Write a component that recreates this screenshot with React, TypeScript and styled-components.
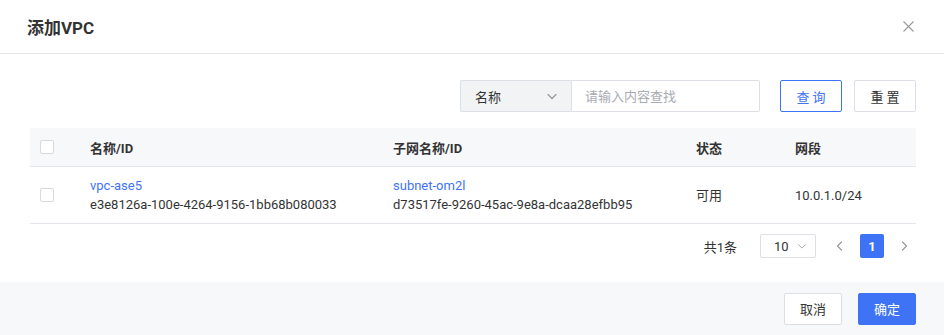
import React from 'react';
import styled, { createGlobalStyle } from 'styled-components';

const GlobalStyle = createGlobalStyle`
  * { box-sizing: border-box; }
  body {
    margin: 0;
    background: #fff;
    font-family: Roboto, "Noto Sans CJK SC", sans-serif;
    font-size: 13px;
    color: #333;
  }
`;

type RowType = {
    name: string;
    id: string;
    subnet: string;
    subnetId: string;
    status: string;
    cidr: string;
}

const rows: RowType[] = [
    {
        name: 'vpc-ase5',
        id: 'e3e8126a-100e-4264-9156-1bb68b080033',
        subnet: 'subnet-om2l',
        subnetId: 'd73517fe-9260-45ac-9e8a-dcaa28efbb95',
        status: '可用',
        cidr: '10.0.1.0/24',
    },
];

const Chevron = ({ dir = 'down', size = 12 }: { dir?: 'down' | 'left' | 'right'; size?: number }) => {
    const d = dir === 'down' ? 'M2 4.5 L6 8.5 L10 4.5' : dir === 'left' ? 'M7.5 2 L3.5 6 L7.5 10' : 'M4.5 2 L8.5 6 L4.5 10';
    return (
        <svg width={size} height={size} viewBox="0 0 12 12" fill="none">
            <path d={d} stroke="currentColor" strokeWidth="1.2" strokeLinecap="round" strokeLinejoin="round"/>
        </svg>
    );
};

export default function App() {
    return (
        <>
            <GlobalStyle/>
            <Dialog>
                <Header>
                    <Title>添加VPC</Title>
                    <Close>
                        <svg width="11" height="11" viewBox="0 0 11 11">
                            <path d="M0.5 0.5 L10.5 10.5 M10.5 0.5 L0.5 10.5" stroke="#9a9a9a" strokeWidth="1.1"/>
                        </svg>
                    </Close>
                </Header>
                <Body>
                    <SearchBar>
                        <FieldSelect>
                            <span>名称</span>
                            <Chevron/>
                        </FieldSelect>
                        <SearchInput placeholder="请输入内容查找"/>
                        <Button $variant="outline">查 询</Button>
                        <Button>重 置</Button>
                    </SearchBar>
                    <Table>
                        <HeadRow>
                            <CheckCell><Checkbox/></CheckCell>
                            <HeadCell>名称/ID</HeadCell>
                            <HeadCell>子网名称/ID</HeadCell>
                            <HeadCell>状态</HeadCell>
                            <HeadCell>网段</HeadCell>
                        </HeadRow>
                        {rows.map(r => (
                            <BodyRow key={r.id}>
                                <CheckCell><Checkbox/></CheckCell>
                                <Cell>
                                    <LinkText>{r.name}</LinkText>
                                    <div>{r.id}</div>
                                </Cell>
                                <Cell>
                                    <LinkText>{r.subnet}</LinkText>
                                    <div>{r.subnetId}</div>
                                </Cell>
                                <Cell>{r.status}</Cell>
                                <Cell>{r.cidr}</Cell>
                            </BodyRow>
                        ))}
                    </Table>
                    <Pager>
                        <Total>共1条</Total>
                        <SizeSelect>
                            <span>10</span>
                            <Chevron size={10}/>
                        </SizeSelect>
                        <Arrow><Chevron dir="left"/></Arrow>
                        <PageBtn>1</PageBtn>
                        <Arrow><Chevron dir="right"/></Arrow>
                    </Pager>
                </Body>
                <Footer>
                    <Button $wide>取消</Button>
                    <Button $wide $variant="primary">确定</Button>
                </Footer>
            </Dialog>
        </>
    );
}

const Dialog = styled.div`
    width: 944px;
    height: 335px;
    display: flex;
    flex-direction: column;
    background: #fff;
`

const Header = styled.div`
    height: 54px;
    padding: 0 30px 0 27px;
    display: flex;
    align-items: center;
    justify-content: space-between;
    border-bottom: 1px solid #e5e6eb;
`

const Title = styled.div`
    font-size: 17px;
    font-weight: 700;
    color: #333;
`

const Close = styled.div`
    display: flex;
    color: #999;
`

const Body = styled.div`
    flex: 1;
    padding: 26px 28px 0 30px;
`

const SearchBar = styled.div`
    display: flex;
    justify-content: flex-end;
    align-items: center;
    gap: 12px;
    margin-bottom: 16px;
`

const FieldSelect = styled.div`
    width: 111px;
    height: 32px;
    padding: 0 13px 0 14px;
    display: flex;
    align-items: center;
    justify-content: space-between;
    background: #f2f3f5;
    border: 1px solid #dcdfe6;
    border-right: none;
    border-radius: 2px 0 0 2px;
    color: #333;
    margin-right: -12px;
    svg { color: #999; }
`

const SearchInput = styled.input`
    width: 189px;
    height: 32px;
    padding: 0 13px;
    border: 1px solid #dcdfe6;
    border-radius: 0 2px 2px 0;
    font: inherit;
    font-size: 13px;
    outline: none;
    margin-right: 8px;
    &::placeholder { color: #a8abb2; }
`

const Button = styled.button<{ $variant?: 'outline' | 'primary'; $wide?: boolean }>`
    height: 32px;
    width: ${p => p.$wide ? '58px' : '62px'};
    border-radius: 2px;
    font: inherit;
    font-size: 13px;
    cursor: pointer;
    background: ${p => p.$variant === 'primary' ? '#3f73f5' : '#fff'};
    color: ${p => p.$variant === 'primary' ? '#fff' : p.$variant === 'outline' ? '#3f73f5' : '#333'};
    border: 1px solid ${p => p.$variant === 'primary' || p.$variant === 'outline' ? '#3f73f5' : '#dcdfe6'};
`

const Table = styled.div`
    display: flex;
    flex-direction: column;
`

const Columns = styled.div`
    display: grid;
    grid-template-columns: 60px 303px 303px 99px 1fr;
    align-items: center;
    border-bottom: 1px solid #e5e6eb;
`

const HeadRow = styled(Columns)`
    height: 39px;
    background: #f7f8fa;
`

const BodyRow = styled(Columns)`
    height: 57px;
`

const CheckCell = styled.div`
    padding-left: 10px;
    display: flex;
`

const Checkbox = styled.span`
    width: 14px;
    height: 14px;
    border: 1px solid #d9d9d9;
    border-radius: 2px;
    background: #fff;
`

const HeadCell = styled.div`
    font-weight: 700;
    color: #333;
`

const Cell = styled.div`
    color: #333;
    line-height: 19px;
`

const LinkText = styled.div`
    color: #3f73f5;
`

const Pager = styled.div`
    display: flex;
    justify-content: flex-end;
    align-items: center;
    margin-top: 10px;
    height: 24px;
`

const Total = styled.span`
    color: #333;
    margin-right: 23px;
`

const SizeSelect = styled.div`
    width: 56px;
    height: 24px;
    padding: 0 8px 0 13px;
    display: flex;
    align-items: center;
    justify-content: space-between;
    border: 1px solid #dcdfe6;
    border-radius: 2px;
    margin-right: 12px;
    svg { color: #aaa; }
`

const Arrow = styled.span`
    width: 24px;
    height: 24px;
    display: flex;
    align-items: center;
    justify-content: center;
    color: #999;
`

const PageBtn = styled.span`
    width: 24px;
    height: 24px;
    display: flex;
    align-items: center;
    justify-content: center;
    background: #3f73f5;
    color: #fff;
    border-radius: 2px;
    font-weight: 700;
    margin: 0 8px;
`

const Footer = styled.div`
    height: 53px;
    background: #f7f8fa;
    display: flex;
    justify-content: flex-end;
    align-items: center;
    gap: 16px;
    padding: 0 28px;
`
